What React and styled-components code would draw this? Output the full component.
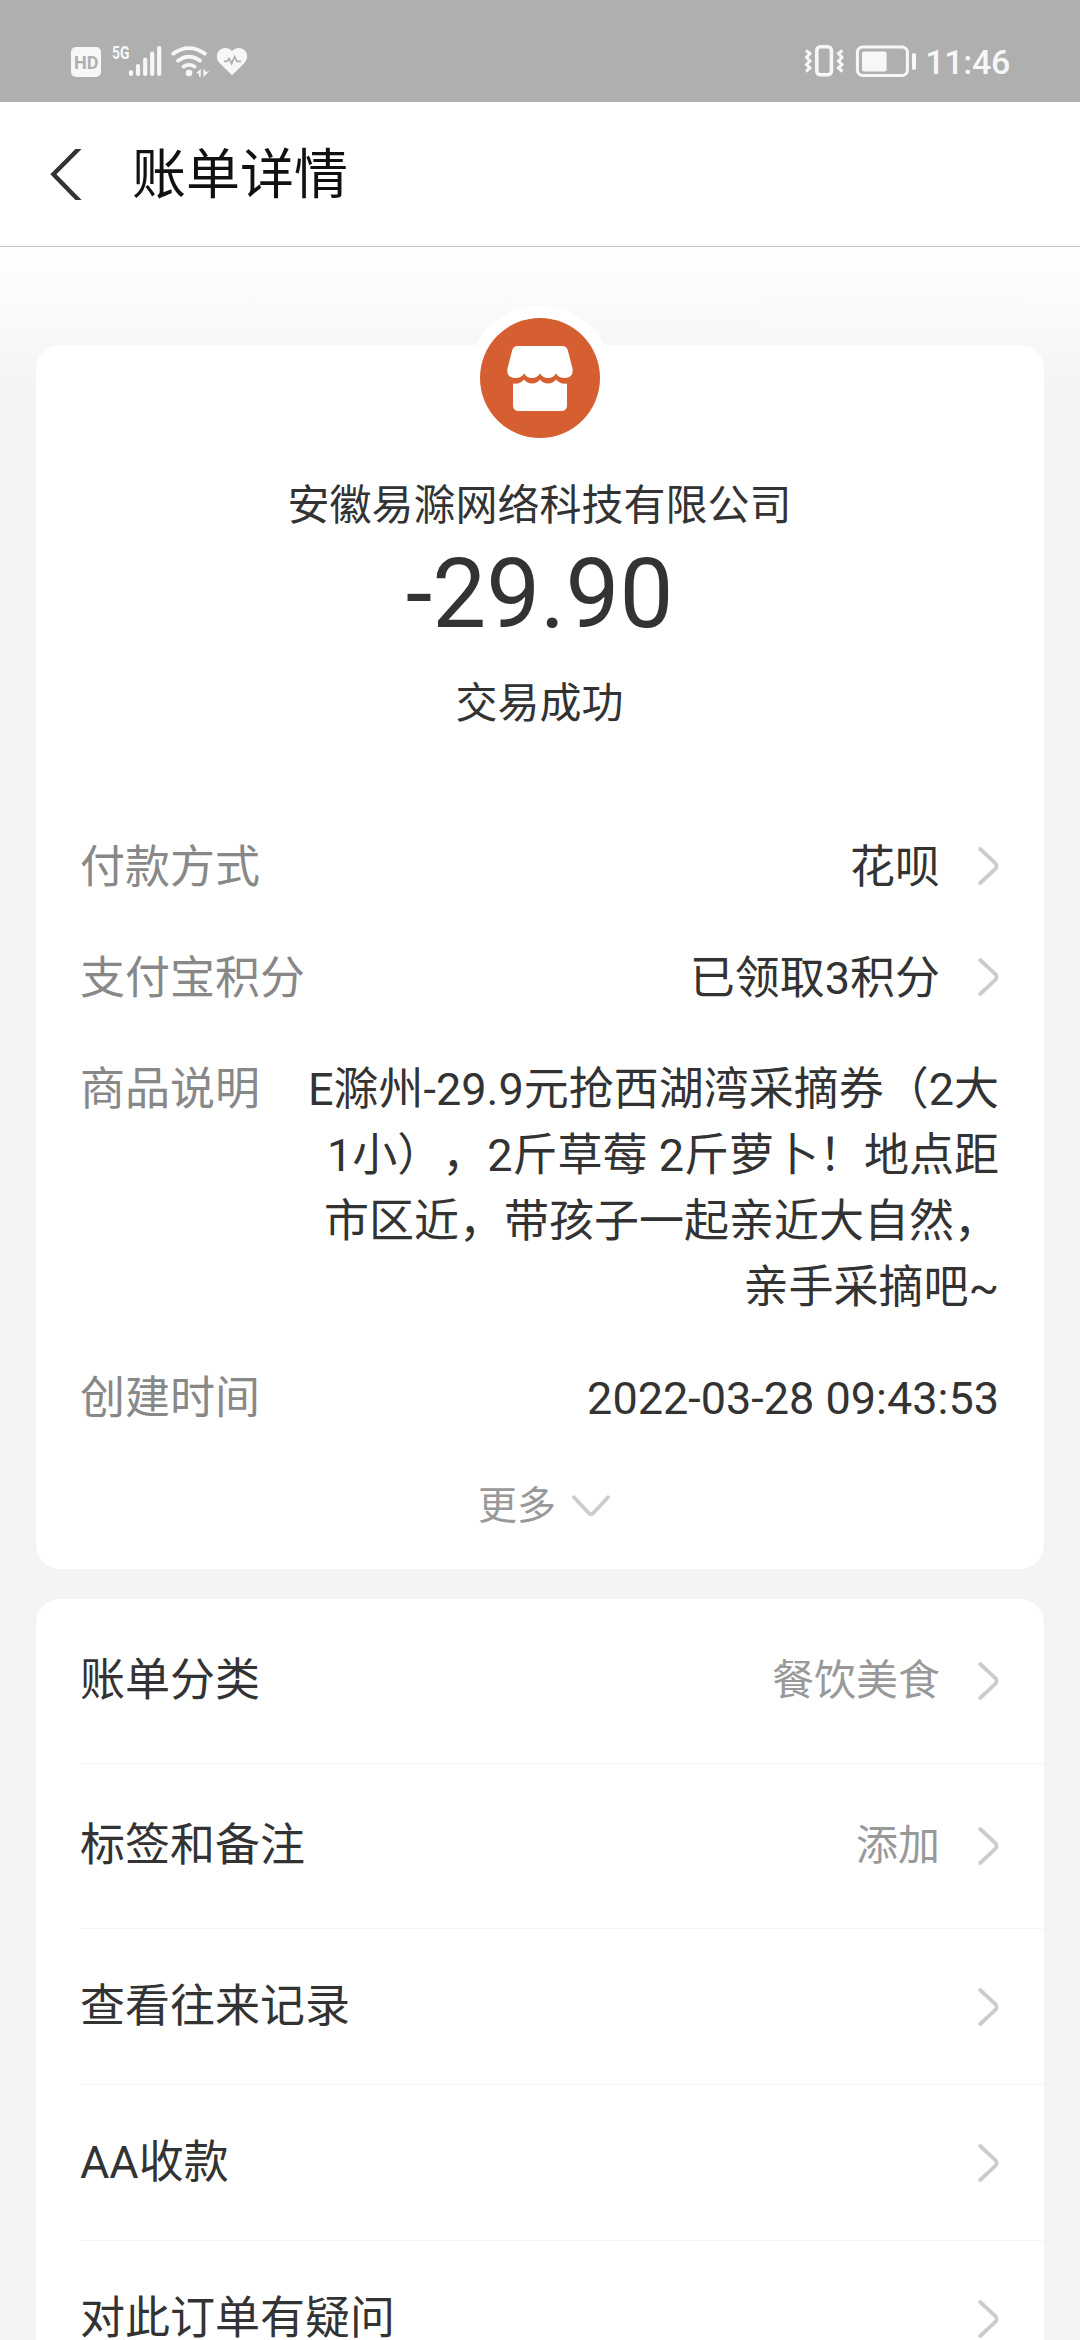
import React from "react";
import styled, { createGlobalStyle } from "styled-components";

const GlobalStyle = createGlobalStyle`
  body {
    margin: 0;
    background-color: #f4f4f4;
    font-family: Roboto, "Noto Sans CJK SC", sans-serif;
    color: #333;
  }
`;

const Page = styled.div`
  display: flex;
  flex-direction: column;
  width: 1080px;
  height: 2340px;
  overflow: hidden;
`;

const StatusBar = styled.div`
  display: flex;
  flex: none;
  justify-content: space-between;
  height: 102px;
  box-sizing: border-box;
  padding: 40px 70px 0 70px;
  background-color: #afafaf;
  color: #f7f7f7;
`;

const StatusGroup = styled.div`
  display: flex;
  align-items: flex-start;
`;

const Clock = styled.span`
  margin-left: 8px;
  font-size: 34px;
  font-weight: 500;
  line-height: 44px;
  letter-spacing: -0.3px;
`;

const Header = styled.div`
  display: flex;
  flex: none;
  align-items: center;
  height: 144px;
  padding-left: 50px;
  background-color: #fff;
  border-bottom: 1px solid #c4c4c4;
`;

const Title = styled.h1`
  margin: 4px 0 0 50px;
  font-size: 54px;
  font-weight: 400;
  line-height: 72px;
  color: #111;
`;

const Content = styled.div`
  display: flex;
  flex: none;
  flex-direction: column;
  gap: 30px;
  padding: 98px 36px 0;
  background: linear-gradient(#fff, #f4f4f4 140px);
`;

const Card = styled.div`
  display: flex;
  flex-direction: column;
  border-radius: 24px;
  background-color: #fff;
`;

const SummaryCard = styled(Card)`
  align-items: center;
  padding: 0 45px 33px 44px;
`;

const Avatar = styled.div`
  display: flex;
  align-items: center;
  justify-content: center;
  width: 144px;
  height: 144px;
  margin-top: -39px;
  border-radius: 50%;
  background-color: #fff;
`;

const Merchant = styled.div`
  margin-top: 26px;
  font-size: 42px;
  line-height: 60px;
`;

const Amount = styled.div`
  margin-top: 2px;
  font-size: 96px;
  line-height: 112px;
`;

const Result = styled.div`
  margin-top: 24px;
  font-size: 42px;
  line-height: 60px;
`;

const Details = styled.div`
  display: flex;
  flex-direction: column;
  align-self: stretch;
  gap: 45px;
  margin-top: 101px;
`;

const DetailRow = styled.div`
  display: flex;
  justify-content: space-between;
  font-size: 45px;
  line-height: 66px;
  white-space: nowrap;
`;

const DetailLabel = styled.span`
  color: #888;
`;

const DetailValue = styled.span`
  display: flex;
  align-items: center;
  gap: 38px;
  text-align: right;
  text-spacing-trim: space-all;

  svg {
    margin-bottom: 4px;
  }
`;

const More = styled.div`
  display: flex;
  align-items: center;
  gap: 16px;
  margin: 44px 0 0 9px;
  font-size: 39px;
  line-height: 60px;
  color: #999;
`;

const ListRow = styled.div`
  display: flex;
  align-items: center;
  justify-content: space-between;
  height: ${props => (props.$tall ? 164 : 155)}px;
  margin-left: 44px;
  padding-right: 45px;
  border-bottom: 1px solid #f5f5f5;
  font-size: 45px;
  line-height: 66px;
`;

const ListValue = styled.span`
  display: flex;
  align-items: center;
  gap: 38px;
  font-size: 42px;
  color: #999;
`;

const details = [
  { label: "付款方式", value: ["花呗"], arrow: true },
  { label: "支付宝积分", value: ["已领取3积分"], arrow: true },
  {
    label: "商品说明",
    value: [
      "E滁州-29.9元抢西湖湾采摘券（2大",
      "1小），2斤草莓 2斤萝卜！地点距",
      "市区近，带孩子一起亲近大自然，",
      "亲手采摘吧~"
    ]
  },
  { label: "创建时间", value: ["2022-03-28 09:43:53"] }
];

const actions = [
  { label: "账单分类", value: "餐饮美食", tall: true },
  { label: "标签和备注", value: "添加", tall: true },
  { label: "查看往来记录" },
  { label: "AA收款" },
  { label: "对此订单有疑问" }
];

const ArrowRight = () => (
  <svg width="21" height="38" viewBox="0 0 21 38" fill="none" stroke="#ccc" strokeWidth="3.8" strokeLinecap="round" strokeLinejoin="round">
    <path d="M2.2 2 L17.6 16.4 Q19.6 19 17.6 21.6 L2.2 36" />
  </svg>
);

const ArrowDown = () => (
  <svg width="38" height="22" viewBox="0 0 38 22" fill="none" stroke="#ccc" strokeWidth="3.8" strokeLinecap="round" strokeLinejoin="round">
    <path d="M2 2.2 L16.6 18 Q19 20 21.4 18 L36 2.2" />
  </svg>
);

const BackArrow = () => (
  <svg width="32" height="51" viewBox="0 0 32 51" fill="none" stroke="#333" strokeWidth="4.4">
    <path d="M31 -2.5 L3.4 25.3 L31 53.5" />
  </svg>
);

const ShopIcon = () => (
  <svg width="120" height="120" viewBox="0 0 120 120">
    <circle cx="60" cy="60" r="60" fill="#d55f31" />
    <path
      fill="#fff"
      d="M38 28 H82 Q87 28 88 33 L92.6 51 Q93.5 60 84.5 60 Q79 60 76 55.5 Q73 60 68 60 Q63 60 60 55.5 Q57 60 52 60 Q47 60 44.2 55.5 Q41 60 35.5 60 Q26.5 60 27.4 51 L32 33 Q33 28 38 28 Z"
    />
    <path
      fill="#fff"
      d="M33 65.5 Q40 66.5 44.2 61.5 Q47 65.6 52 65.6 Q57 65.6 60 61.5 Q63 65.6 68 65.6 Q73 65.6 76 61.5 Q80 66.5 87 65.5 V87 Q87 93 81 93 H39 Q33 93 33 87 Z"
    />
  </svg>
);

// HD, signal, wifi and health icons
const LeftIcons = () => (
  <svg width="180" height="42" viewBox="70 40 180 42" fill="#f7f7f7">
    <rect x="71" y="47" width="30" height="30" rx="5" />
    <text x="74" y="68.6" fontSize="19" fontWeight="700" fontFamily="Roboto" fill="#afafaf" textLength="24.5" lengthAdjust="spacingAndGlyphs">HD</text>
    <text x="112" y="59.3" fontSize="19" fontWeight="700" fontFamily="Roboto" textLength="17.5" lengthAdjust="spacingAndGlyphs">5G</text>
    <g stroke="#f7f7f7" strokeWidth="4.2" strokeLinecap="round">
      <path d="M131 72.2 V74 M138 66 V74 M145.2 59.5 V74 M152.2 53.5 V74 M159.2 48 V74" />
    </g>
    <g fill="none" stroke="#f7f7f7" strokeWidth="3.8" strokeLinecap="round">
      <path d="M173.2 53.6 Q189 42.6 204.8 53.6" />
      <path d="M178 60.6 Q189 52.6 200 60.6" />
      <path d="M183.6 66.6 Q189 63.2 194.6 66.6" />
    </g>
    <circle cx="189" cy="73" r="3.3" />
    <path d="M196 73.6 L200.8 68.8 V76.8 H199 V73.6 Z M203.4 69.4 H205.2 V72 L209.4 71 L203.4 77 Z" />
    <path d="M232 75.3 L220 63.4 C216.4 59.8 215.8 54.6 218.6 51.2 C222 47 228.6 46.8 232 51.2 C235.4 46.8 242 47 245.4 51.2 C248.2 54.6 247.6 59.8 244 63.4 Z" />
    <path d="M224 61.3 H227 L229.2 58.6 L231.6 63.6 L234.6 56.8 L237 61.3 H241" fill="none" stroke="#afafaf" strokeWidth="1.7" />
  </svg>
);

// vibrate and battery icons
const RightIcons = () => (
  <svg width="114" height="42" viewBox="802 40 114 42" fill="none" stroke="#f7f7f7">
    <path d="M805 50.5 L809 53.5 L805.5 57.5 L809 61 L805.5 64.5 L809 68 L805 71.5" strokeWidth="3" />
    <path d="M841.5 50.5 L837.5 53.5 L841 57.5 L837.5 61 L841 64.5 L837.5 68 L841.5 71.5" strokeWidth="3" />
    <rect x="815.8" y="46.8" width="14.6" height="28" rx="3.6" strokeWidth="3.6" />
    <rect x="856.4" y="47" width="50" height="28.6" rx="5.5" strokeWidth="3" />
    <rect x="861" y="51.4" width="24.6" height="20" rx="2" fill="#f7f7f7" stroke="none" />
    <path d="M913 55 V68" strokeWidth="4" strokeLinecap="round" />
  </svg>
);

const App = () => (
  <Page>
    <GlobalStyle />
    <StatusBar>
      <StatusGroup>
        <LeftIcons />
      </StatusGroup>
      <StatusGroup>
        <RightIcons />
        <Clock>11:46</Clock>
      </StatusGroup>
    </StatusBar>

    <Header>
      <BackArrow />
      <Title>账单详情</Title>
    </Header>

    <Content>
      <SummaryCard>
        <Avatar>
          <ShopIcon />
        </Avatar>
        <Merchant>安徽易滁网络科技有限公司</Merchant>
        <Amount>-29.90</Amount>
        <Result>交易成功</Result>
        <Details>
          {details.map(item => (
            <DetailRow key={item.label}>
              <DetailLabel>{item.label}</DetailLabel>
              <DetailValue>
                <span>
                  {item.value.map((line, index) => (
                    <React.Fragment key={index}>
                      {index > 0 && <br />}
                      {line}
                    </React.Fragment>
                  ))}
                </span>
                {item.arrow && <ArrowRight />}
              </DetailValue>
            </DetailRow>
          ))}
        </Details>
        <More>
          更多
          <ArrowDown />
        </More>
      </SummaryCard>

      <Card>
        {actions.map(item => (
          <ListRow key={item.label} $tall={item.tall}>
            {item.label}
            <ListValue>
              {item.value}
              <ArrowRight />
            </ListValue>
          </ListRow>
        ))}
      </Card>
    </Content>
  </Page>
);

export default App;
